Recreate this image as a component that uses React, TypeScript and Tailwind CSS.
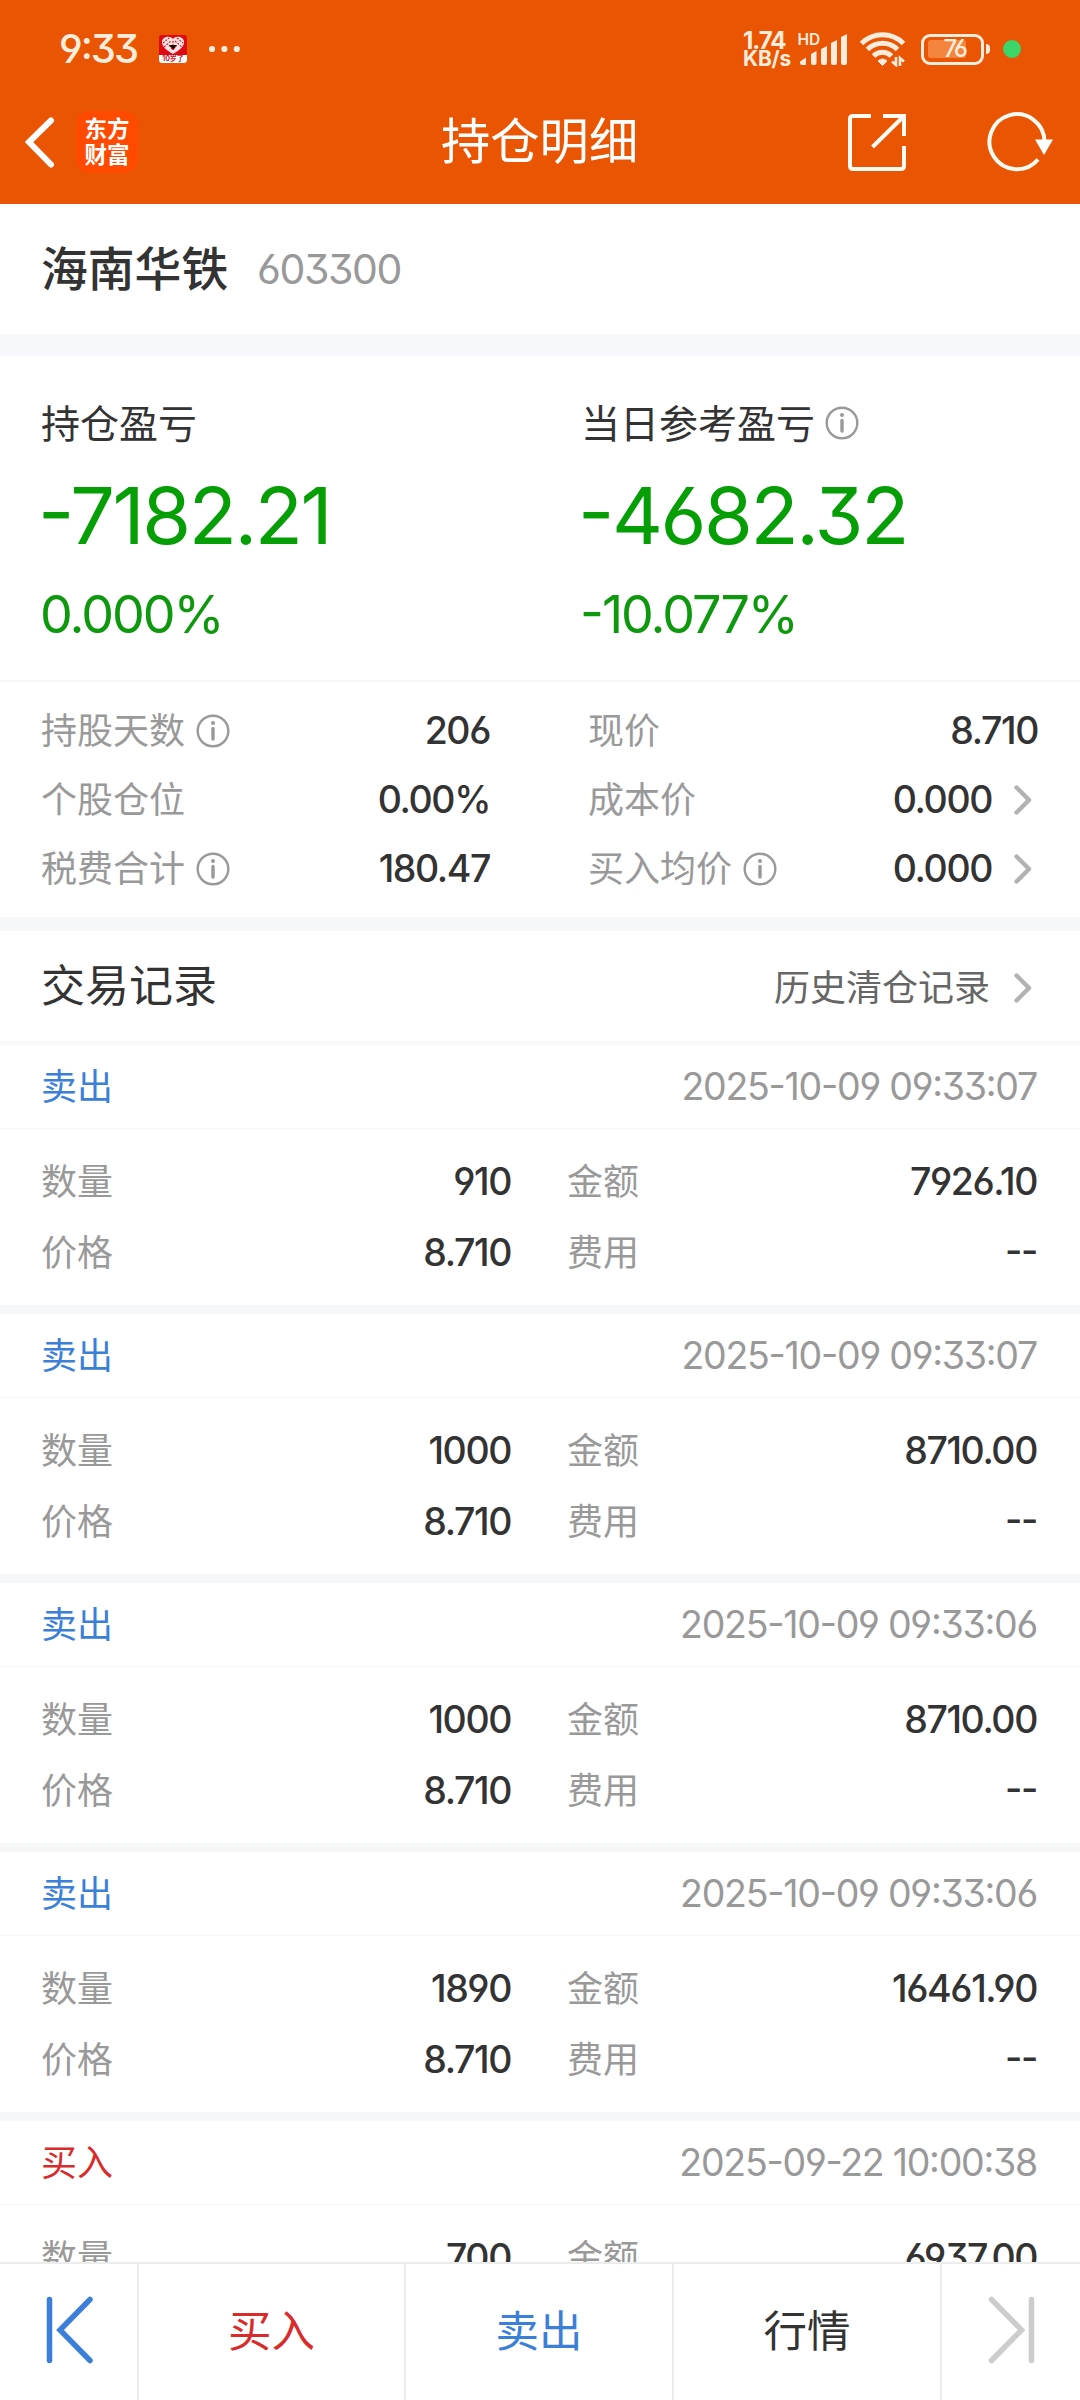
import React from "react"

const NUM = "[font-feature-settings:'cv03','cv04','cv09','case']";

interface TradeRecord {
  side: "buy" | "sell";
  time: string;
  amount: string;
  price: string;
  total: string;
  fee: string;
}

const records: TradeRecord[] = [
  { side: "sell", time: "2025-10-09 09:33:07", amount: "910", price: "8.710", total: "7926.10", fee: "--" },
  { side: "sell", time: "2025-10-09 09:33:07", amount: "1000", price: "8.710", total: "8710.00", fee: "--" },
  { side: "sell", time: "2025-10-09 09:33:06", amount: "1000", price: "8.710", total: "8710.00", fee: "--" },
  { side: "sell", time: "2025-10-09 09:33:06", amount: "1890", price: "8.710", total: "16461.90", fee: "--" },
  { side: "buy", time: "2025-09-22 10:00:38", amount: "700", price: "9.910", total: "6937.00", fee: "--" },
];

function InfoIcon() {
  return (
    <svg width="34" height="34" viewBox="0 0 34 34" fill="none" className="shrink-0">
      <circle cx="17" cy="17" r="15.3" stroke="#999" strokeWidth="2.4" />
      <circle cx="17" cy="9" r="2" fill="#999" />
      <path d="M17 14.5V25" stroke="#999" strokeWidth="3.4" strokeLinecap="round" />
    </svg>
  );
}

function Chevron() {
  return (
    <svg width="18" height="30" viewBox="0 0 18 30" fill="none" className="shrink-0">
      <path d="M2.5 2.5L15 15L2.5 27.5" stroke="#b2b2b2" strokeWidth="4.4" strokeLinecap="round" strokeLinejoin="round" />
    </svg>
  );
}

function StatusBar() {
  return (
    <div className="flex h-[98px] items-center pl-[59px] text-[#ffecdc]">
      <span className={`w-[100px] text-[40px] font-medium leading-none tracking-[-2px] ${NUM}`}>9:33</span>
      <div className="flex h-7 w-7 flex-col overflow-hidden rounded-[3px] bg-[#dd0a14]">
        <svg width="28" height="20" viewBox="0 0 28 20">
          <path d="M14 19C7 15 2.5 11 3 6.5C3.5 1.5 11 0 14 4C17 0 24.5 1.5 25 6.5C25.5 11 21 15 14 19Z" fill="#fde3e3" />
          <path d="M4 8L10 3M5 12L12 6M18 3L24 8M16 6L23 12M10 10L14 15L18 10M14 6V10" stroke="#dd0a14" strokeWidth="1.1" strokeDasharray="2 1.3" />
        </svg>
        <span className="h-2 bg-white text-center text-[7px] font-bold leading-[8px] text-[#c8141c]">10岁了</span>
      </div>
      <svg width="34" height="8" viewBox="0 0 34 8" fill="#ffecdc" className="ml-5">
        <circle cx="5" cy="4" r="3.1" />
        <circle cx="17.4" cy="4" r="3.1" />
        <circle cx="29.8" cy="4" r="3.1" />
      </svg>
      <div className="ml-[502px] flex w-[54px] flex-col pt-0.5 font-bold">
        <span className={`text-[24px] leading-[18px] tracking-[-1px] ${NUM}`}>1.74</span>
        <span className="text-[21px] leading-[18px] tracking-[-0.2px]">KB/s</span>
      </div>
      <svg width="54" height="34" viewBox="0 0 54 34" fill="#ffecdc" className="overflow-visible">
        <text x="0.5" y="13" fontSize="15.5" fontWeight="600" fontFamily="Inter">HD</text>
        <path d="M3 29.5L9 25.5V33H5Q3 33 3 31ZM14 22L19.5 19V31Q19.5 33 17.5 33H16Q14 33 14 31ZM24 17L30 14V31Q30 33 28 33H26Q24 33 24 31ZM34 11L40 8V31Q40 33 38 33H36Q34 33 34 31ZM44 5L50 2V31Q50 33 48 33H46Q44 33 44 31Z" />
      </svg>
      <svg width="48" height="36" viewBox="0 0 48 36" fill="none" className="ml-2">
        <path d="M2.5 12.5A29.5 29.5 0 0 1 44.5 12.5" stroke="#ffecdc" strokeWidth="5" />
        <path d="M8.5 18.5A21 21 0 0 1 38.5 18.5" stroke="#ffecdc" strokeWidth="5" />
        <path d="M14.5 25A12.500 12.500 0 0 1 32.5 25" stroke="#ffecdc" strokeWidth="5" />
        <path d="M19 30Q23.5 26 28 30L23.5 34.5Z" fill="#ffecdc" stroke="#ffecdc" strokeWidth="1" strokeLinejoin="round" />
        <path d="M37 26V34L33 30.5M41 35V27L45 30.5" stroke="#ffecdc" strokeWidth="2.6" />
      </svg>
      <div className="ml-[14px] flex h-[31px] w-[63px] items-center rounded-[9px] border-[3px] border-[#ffecdc] pl-1">
        <div className="flex h-[18px] w-[38px] items-center justify-end rounded-[3px] bg-[#f4853f]">
          <span className={`text-[24px] font-medium leading-none tracking-[-2px] ${NUM}`}>76</span>
        </div>
      </div>
      <div className="ml-[2px] h-[10px] w-1 rounded-r-sm bg-[#ffecdc]" />
      <div className="ml-[13px] h-[18px] w-[18px] rounded-full bg-[#3ad66a]" />
    </div>
  );
}

function TitleBar() {
  return (
    <div className="flex h-[88px] items-center">
      <svg width="32" height="52" viewBox="0 0 32 52" fill="none" className="ml-[24px]">
        <path d="M27 4.500L5 26L27 48.500" stroke="#fff" strokeWidth="6" strokeLinecap="round" strokeLinejoin="miter" />
      </svg>
      <div className="ml-5 flex h-[62px] w-[62px] flex-col items-center justify-center rounded-[14px] bg-[#ff4a00] text-[22.5px] font-bold leading-[26px] text-white">
        <span>东方</span>
        <span>财富</span>
      </div>
      <h1 className="ml-[303px] w-[200px] whitespace-nowrap text-[49.3px] leading-none text-white">持仓明细</h1>
      <svg width="60" height="60" viewBox="0 0 60 60" fill="none" className="ml-[206px]" stroke="#fffaf2" strokeWidth="4">
        <path d="M24 4H6Q3 4 3 7V54Q3 57 6 57H54Q57 57 57 54V34" />
        <path d="M36 4H57V24M57 4L25.5 35" />
      </svg>
      <svg width="68" height="62" viewBox="0 0 68 62" fill="none" className="ml-[80px]">
        <path d="M51 48.5A27.5 27.5 0 1 1 57.5 30.5" stroke="#fffaf2" strokeWidth="4" />
        <path d="M48 28.5H66L57 44Z" fill="#fff" />
      </svg>
    </div>
  );
}

interface SummaryCellProps {
  label: string;
  info?: boolean;
  value: string;
  percent: string;
}

function SummaryCell({ label, info, value, percent }: SummaryCellProps) {
  return (
    <div className="flex w-[540px] flex-col pl-[41px] pt-[46px]">
      <div className="flex h-[42px] items-center gap-[10px]">
        <span className="text-[39px] leading-none">{label}</span>
        {info && <InfoIcon />}
      </div>
      <span className={`-ml-[3px] mt-[31px] text-[79px] leading-[80px] tracking-[-2.4px] text-[#059f05] ${NUM}`}>{value}</span>
      <span className={`-ml-px mt-[32px] text-[52px] leading-[56px] tracking-[-2px] text-[#0d980d] ${NUM}`}>{percent}</span>
    </div>
  );
}

interface StatRowProps {
  label: string;
  info?: boolean;
  value: string;
  link?: boolean;
}

function StatRow({ label, info, value, link }: StatRowProps) {
  return (
    <div className="flex h-[69px] items-center justify-between">
      <div className="flex items-center gap-[11px] text-[#999]">
        <span className="text-[36px] leading-none">{label}</span>
        {info && <InfoIcon />}
      </div>
      <div className="flex items-center">
        <span className={`text-[37.5px] font-[450] leading-none tracking-[-1.4px] ${NUM}`}>{value}</span>
        {link && <span className="ml-[22px] mr-[6px]"><Chevron /></span>}
      </div>
    </div>
  );
}

function Field({ label, value }: { label: string; value: string }) {
  return (
    <div className="flex h-[71px] items-center justify-between">
      <span className="text-[36px] leading-none text-[#999]">{label}</span>
      <span className={`text-[37.5px] font-[450] leading-none tracking-[-1.4px] ${NUM}`}>{value}</span>
    </div>
  );
}

function RecordCard({ record }: { record: TradeRecord }) {
  return (
    <div className="h-[269px] shrink-0 border-b-[9px] border-[#f6f7f9]">
      <div className="flex h-[84px] items-center justify-between border-b border-[#f5f6f6] pl-[41px] pr-[43px]">
        <span className={`text-[36px] leading-none ${record.side === "buy" ? "text-[#d92b2b]" : "text-[#3b7fd9]"}`}>
          {record.side === "buy" ? "买入" : "卖出"}
        </span>
        <span className={`text-[37.5px] leading-none tracking-[-1.25px] text-[#999] ${NUM}`}>{record.time}</span>
      </div>
      <div className="grid grid-cols-[470px_470px] gap-x-[56px] pl-[41px] pt-[17px]">
        <Field label="数量" value={record.amount} />
        <Field label="金额" value={record.total} />
        <Field label="价格" value={record.price} />
        <Field label="费用" value={record.fee} />
      </div>
    </div>
  );
}

function BottomBar() {
  return (
    <div className="flex h-[138px] shrink-0 border-t-2 border-[#ececec] bg-white text-[43.5px]">
      <div className="flex w-[139px] items-center border-r-2 border-[#ececec] pb-1 pl-[46px]">
        <svg width="48" height="68" viewBox="0 0 48 68" fill="none" stroke="#3b7fd9" strokeWidth="5.5" strokeLinecap="round">
          <path d="M3.5 3.5V64.5M44 3.5L14 34L44 64.5" />
        </svg>
      </div>
      <div className="flex w-[267px] items-center justify-center border-r-2 border-[#ececec] text-[#d92b2b]">买入</div>
      <div className="flex w-[268px] items-center justify-center border-r-2 border-[#ececec] text-[#3b7fd9]">卖出</div>
      <div className="flex w-[268px] items-center justify-center border-r-2 border-[#ececec]">行情</div>
      <div className="flex flex-1 items-center pb-1 pl-[46px]">
        <svg width="48" height="68" viewBox="0 0 48 68" fill="none" stroke="#ccc" strokeWidth="5.5" strokeLinecap="round">
          <path d="M43.5 3.5V64.5M3.5 3.5L33.5 34L3.5 64.5" />
        </svg>
      </div>
    </div>
  );
}

export default function App() {
  return (
    <div className="flex h-[2400px] w-[1080px] flex-col overflow-hidden bg-white font-[Inter,'Noto_Sans_CJK_SC',sans-serif] text-[#333]">
      <header className="h-[204px] shrink-0 bg-[#e95502]">
        <StatusBar />
        <TitleBar />
      </header>

      <div className="flex h-[152px] shrink-0 items-center border-b-[22px] border-[#f7f8fb] pl-[41px]">
        <span className="w-[216px] text-[46.8px] font-medium leading-none">海南华铁</span>
        <span className={`text-[41px] leading-none tracking-[-1.4px] text-[#999] ${NUM}`}>603300</span>
      </div>

      <div className="flex h-[326px] shrink-0 border-b-2 border-[#f7f7f7]">
        <SummaryCell label="持仓盈亏" value="-7182.21" percent="0.000%" />
        <SummaryCell label="当日参考盈亏" info value="-4682.32" percent="-10.077%" />
      </div>

      <div className="grid h-[249px] shrink-0 grid-cols-[449px_450px] content-start gap-x-[98px] border-b-[14px] border-[#f6f7fa] pl-[41px] pt-[14px]">
        <StatRow label="持股天数" info value="206" />
        <StatRow label="现价" value="8.710" />
        <StatRow label="个股仓位" value="0.00%" />
        <StatRow label="成本价" value="0.000" link />
        <StatRow label="税费合计" info value="180.47" />
        <StatRow label="买入均价" info value="0.000" link />
      </div>

      <div className="flex h-[114px] shrink-0 items-center justify-between border-b-4 border-[#f7f8f9] pl-[41px] pr-[48px]">
        <h2 className="text-[44px] leading-none">交易记录</h2>
        <div className="flex items-center gap-6 pt-1">
          <span className="text-[36px] leading-none text-[#666]">历史清仓记录</span>
          <Chevron />
        </div>
      </div>

      <div className="flex min-h-0 flex-1 flex-col overflow-hidden">
        {records.map((record, i) => (
          <RecordCard key={i} record={record} />
        ))}
      </div>

      <BottomBar />
    </div>
  );
}
